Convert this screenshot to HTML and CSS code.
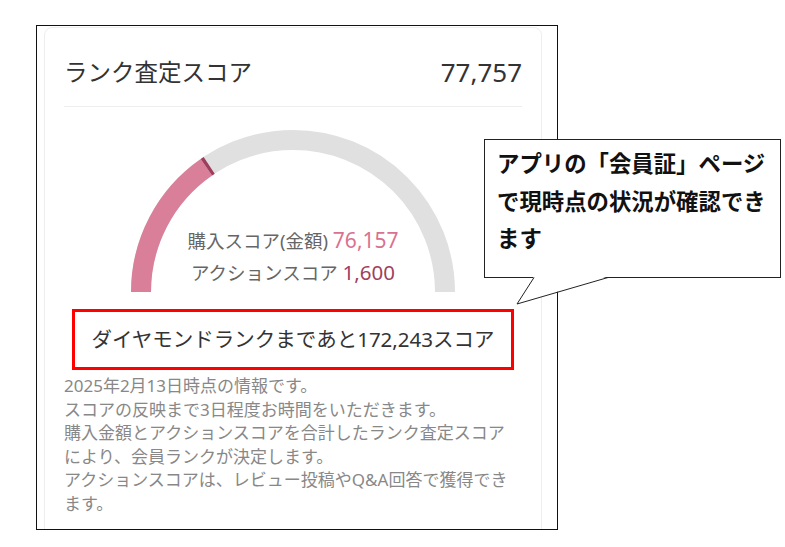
FILE: index.html
```html
<!DOCTYPE html>
<html lang="ja">
<head>
<meta charset="utf-8">
<link rel="stylesheet" href="styles.css">
</head>
<body>
<div class="page">
  <div class="frame">
    <div class="card">
      <div class="head">
        <span class="head-title">ランク査定スコア</span>
        <span class="head-score">77,757</span>
      </div>
      <div class="gauge">
        <svg class="gauge-svg" width="324" height="163" viewBox="0 0 324 163">
          <path d="M 10 162 A 152 152 0 0 1 314 162" fill="none" stroke="#e0e0e0" stroke-width="20"/>
          <path d="M 10 162 A 152 152 0 0 1 75.4 37.2" fill="none" stroke="#d97f99" stroke-width="20"/>
          <path d="M 75.4 37.2 A 152 152 0 0 1 78.2 35.3" fill="none" stroke="#9e3d5e" stroke-width="20"/>
        </svg>
        <div class="gauge-text">
          <div class="gauge-line">購入スコア(金額) <span class="v-buy">76,157</span></div>
          <div class="gauge-line">アクションスコア <span class="v-act">1,600</span></div>
        </div>
      </div>
      <div class="remain">ダイヤモンドランクまであと172,243スコア</div>
      <div class="notes">
        <p>2025年2月13日時点の情報です。</p>
        <p>スコアの反映まで3日程度お時間をいただきます。</p>
        <p>購入金額とアクションスコアを合計したランク査定スコアにより、会員ランクが決定します。</p>
        <p>アクションスコアは、レビュー投稿やQ&amp;A回答で獲得できます。</p>
      </div>
    </div>
  </div>
  <div class="callout">アプリの「会員証」ページ<br>で現時点の状況が確認でき<br>ます</div>
  <svg class="callout-tail" width="100" height="32" viewBox="0 0 100 32">
    <polygon points="24,0.5 7,28 98,0.5" fill="#fff"/>
    <polyline points="24,1.5 7,28 98,1.5" fill="none" stroke="#222" stroke-width="1"/>
  </svg>
</div>
</body>
</html>
```
FILE: styles.css
```css
* { box-sizing: border-box; }
html, body { margin: 0; padding: 0; background: #fff; }
body {
  font-family: "Noto Sans", "Noto Sans CJK JP", sans-serif;
  width: 785px;
  height: 547px;
  overflow: hidden;
}
.page {
  position: relative;
  width: 785px;
  height: 547px;
  padding: 25px 0 0 36px;
}
.frame {
  width: 522px;
  height: 505px;
  border: 1px solid #111;
  overflow: hidden;
}
.card {
  margin: 1px 0 0 7px;
  width: 498px;
  height: 600px;
  border: 1px solid #eee;
  border-radius: 8px;
  padding: 24px 19px 0 19px;
}
.head {
  display: flex;
  justify-content: space-between;
  align-items: center;
  height: 40px;
  border-bottom: 1px solid #eee;
  box-sizing: content-box;
  padding-bottom: 14px;
  color: #333;
}
.head-title { font-size: 23.5px; line-height: 40px; }
.head-score { font-size: 26px; line-height: 40px; }
.gauge {
  display: grid;
  justify-items: center;
  margin-top: 23px;
  height: 163px;
}
.gauge-svg, .gauge-text { grid-area: 1 / 1; }
.gauge-svg { display: block; }
.gauge-text {
  align-self: end;
  padding-bottom: 5px;
  text-align: center;
  color: #666;
  font-size: 18.5px;
}
.gauge-line { line-height: 32px; height: 32px; }
.v-buy { color: #d9728f; font-size: 21px; }
.v-act { color: #a03f60; font-size: 20.5px; }
.remain {
  width: 442px;
  height: 61px;
  margin: 16px auto 0;
  border: 3px solid #f00;
  display: flex;
  align-items: center;
  justify-content: center;
  font-size: 20.5px;
  color: #333;
  padding-bottom: 4px;
}
.notes {
  margin-top: 4px;
  padding-right: 10px;
  color: #888;
  font-size: 17px;
  line-height: 23.5px;
}
.notes p { margin: 0; }
.callout {
  position: absolute;
  left: 484px;
  top: 139px;
  width: 297px;
  height: 139px;
  border: 1px solid #222;
  background: #fff;
  padding: 4px 0 0 12px;
  font-family: "Noto Sans CJK JP", sans-serif;
  font-weight: 700;
  font-size: 22.4px;
  line-height: 37.5px;
  color: #111;
  white-space: nowrap;
}
.callout-tail {
  position: absolute;
  left: 510px;
  top: 276px;
  display: block;
}
```
